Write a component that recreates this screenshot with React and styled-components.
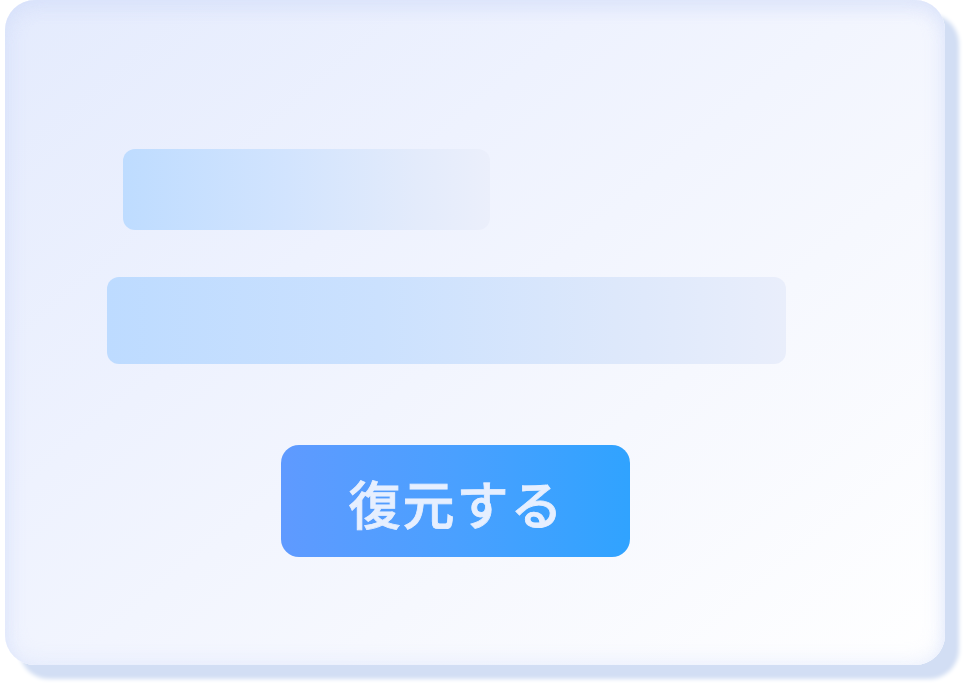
import styled, { createGlobalStyle } from 'styled-components';

const GlobalStyle = createGlobalStyle`
  html, body {
    margin: 0;
    padding: 0;
    background: #ffffff;
  }
  body {
    font-family: "Noto Sans CJK JP", "Noto Sans", sans-serif;
  }
`;

function App () {
  return (
    <Page>
      <GlobalStyle />
      <Card>
        <Bar $indent={118} $width={367} $height={81} />
        <Bar $indent={102} $width={679} $height={87} $wide />
        <RestoreButton type='button'>復元する</RestoreButton>
      </Card>
    </Page>
  );
}

export default App;

const Page = styled.div`
  width: 965px;
  height: 685px;
  padding-left: 5px;
  box-sizing: border-box;
  overflow: hidden;
`;

const Card = styled.div`
  width: 940px;
  height: 665px;
  box-sizing: border-box;
  padding-top: 149px;
  border-radius: 30px;
  display: flex;
  flex-direction: column;
  align-items: flex-start;
  gap: 47px;
  background: linear-gradient(140deg, #e4ebfd 0%, #eef2fe 35%, #f6f8fe 65%, #ffffff 100%);
  box-shadow:
    inset 0 0 22px rgba(204, 217, 250, 0.45),
    inset 0 10px 14px rgba(214, 225, 250, 0.45),
    14px 14px 4px #d2def4;
`;

const Bar = styled.div`
  margin-left: ${p => p.$indent}px;
  width: ${p => p.$width}px;
  height: ${p => p.$height}px;
  border-radius: 12px;
  background: ${p => p.$wide
    ? 'linear-gradient(90deg, #bddbff 0%, #cbe1fe 40%, #dde8fb 75%, #e9eefb 100%)'
    : 'linear-gradient(90deg, #bedcff 0%, #d2e4fe 45%, #e3ebfb 80%, #ebeffb 100%)'};
`;

const RestoreButton = styled.button`
  margin-left: 276px;
  margin-top: 34px;
  width: 349px;
  height: 112px;
  border: none;
  border-radius: 18px;
  background: linear-gradient(90deg, #5f9aff 0%, #4aa0ff 50%, #30a3ff 100%);
  color: #e6efff;
  -webkit-text-stroke: 0.8px #e6efff;
  font-family: "Noto Sans CJK JP", "Noto Sans", sans-serif;
  font-size: 52px;
  font-weight: 500;
  letter-spacing: 2px;
  display: flex;
  align-items: center;
  justify-content: center;
  padding: 2px 0 0 2px;
  cursor: pointer;
`;
